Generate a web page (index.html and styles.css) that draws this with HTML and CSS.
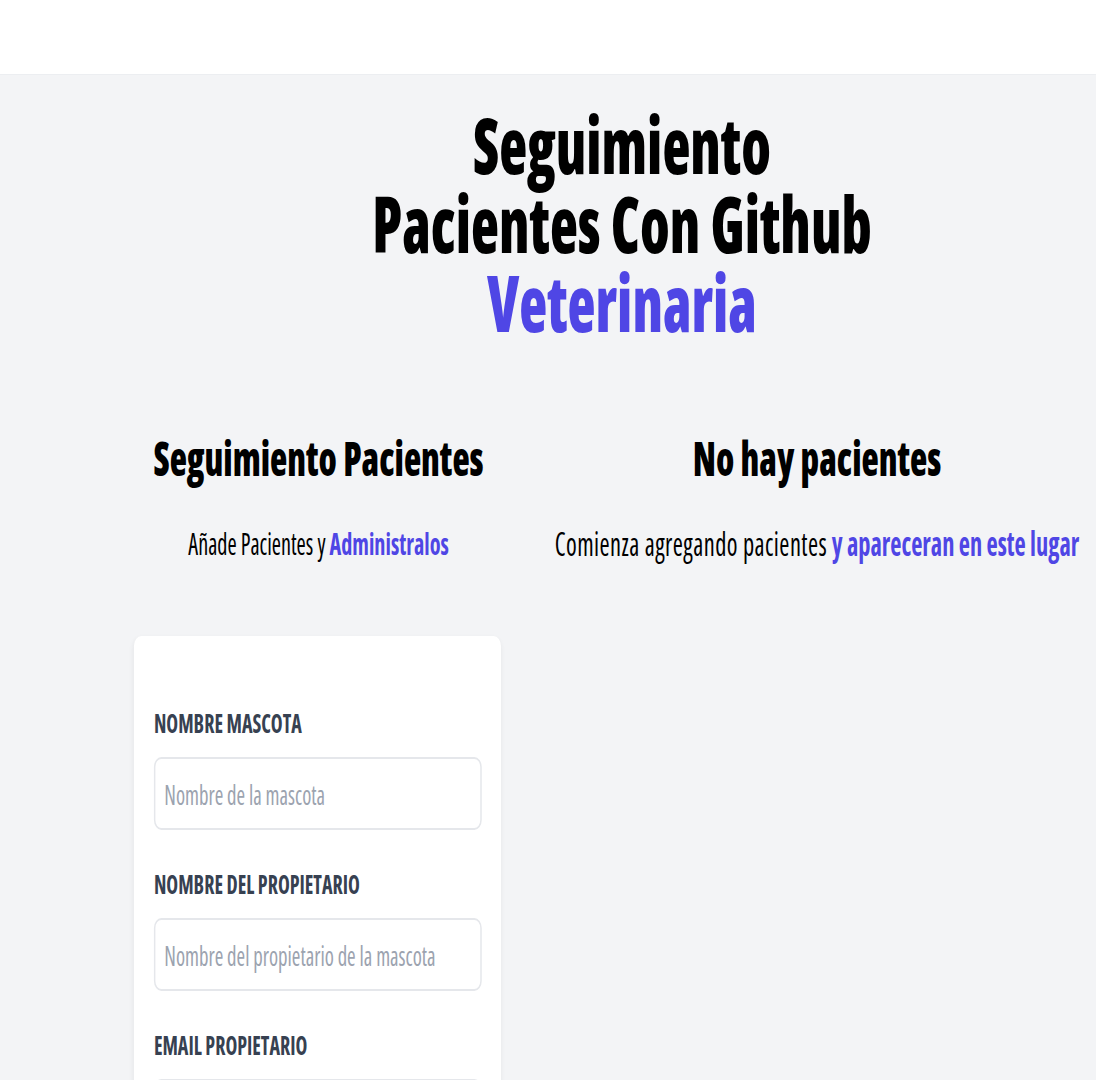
FILE: index.html
```html
<!DOCTYPE html>
<html lang="es">
<head>
<meta charset="utf-8">
<title>Seguimiento Pacientes Veterinaria</title>
<link rel="stylesheet" href="styles.css">
</head>
<body>
<div class="page">
  <header class="topbar"></header>
  <main class="main">
    <h1 class="title">Seguimiento<br>Pacientes Con Github <span class="title-accent">Veterinaria</span></h1>
    <div class="columns">
      <section class="form-col">
        <h2 class="col-title">Seguimiento Pacientes</h2>
        <p class="col-sub">Añade Pacientes y <span class="accent">Administralos</span></p>
        <form class="card">
          <div class="field">
            <label class="label" for="mascota">Nombre Mascota</label>
            <input class="input" id="mascota" type="text" placeholder="Nombre de la mascota">
          </div>
          <div class="field">
            <label class="label" for="propietario">Nombre del Propietario</label>
            <input class="input" id="propietario" type="text" placeholder="Nombre del propietario de la mascota">
          </div>
          <div class="field">
            <label class="label" for="email">Email Propietario</label>
            <input class="input" id="email" type="email" placeholder="Email del propietario">
          </div>
          <div class="field">
            <label class="label" for="alta">Alta</label>
            <input class="input" id="alta" type="text" placeholder="Fecha de alta">
          </div>
        </form>
      </section>
      <section class="list-col">
        <h2 class="col-title">No hay pacientes</h2>
        <p class="col-sub col-sub-wide"><span class="plain">Comienza agregando pacientes</span> <span class="accent">y apareceran en este lugar</span></p>
      </section>
    </div>
  </main>
</div>
</body>
</html>
```
FILE: styles.css
```css
html, body {
  margin: 0;
  padding: 0;
  overflow-x: hidden;
  background: #f3f4f6;
}

.page {
  width: 1481px;
  transform: scaleX(0.74);
  transform-origin: 0 0;
  font-family: "Open Sans", "Liberation Sans", sans-serif;
  font-stretch: 75%;
  color: #000;
}

.topbar {
  height: 74px;
  background: #ffffff;
  border-bottom: 1px solid #eceef1;
}

.main {
  background: #f3f4f6;
  min-height: 1005px;
  padding-top: 30px;
}

.title {
  margin: 0;
  padding-left: 200px;
  text-align: center;
  font-size: 78px;
  line-height: 79px;
  font-weight: 800;
  color: #000;
}

.title-accent {
  display: block;
  color: #4f46e5;
}

.columns {
  display: flex;
  margin-top: 88px;
  padding-left: 134px;
}

.form-col {
  width: 593px;
  flex: none;
}

.list-col {
  flex: 1;
}

.col-title {
  margin: 0;
  text-align: center;
  font-size: 48px;
  line-height: 56px;
  font-weight: 800;
  color: #000;
}

.col-sub {
  margin: 40px 0 0;
  text-align: center;
  font-size: 30px;
  line-height: 36px;
  font-weight: 400;
  color: #000;
  white-space: nowrap;
}

.col-sub-wide {
  font-size: 33px;
}

.plain {
  letter-spacing: 0.6px;
}

.accent {
  color: #4f46e5;
  font-weight: 700;
}

.card {
  margin: 74px 50px 0 47px;
  padding: 71px 26px 60px 27px;
  background: #ffffff;
  border-radius: 10px;
  box-shadow: 0 2px 6px rgba(0, 0, 0, 0.06);
  display: flex;
  flex-direction: column;
  gap: 38px;
}

.field {
  display: flex;
  flex-direction: column;
  gap: 18px;
}

.label {
  display: block;
  font-size: 27px;
  line-height: 32px;
  font-weight: 700;
  text-transform: uppercase;
  color: #374151;
}

.input {
  box-sizing: border-box;
  width: 100%;
  height: 73px;
  padding: 0 12px;
  border: 2px solid #e5e7eb;
  border-radius: 10px;
  background: #fff;
  font-family: inherit;
  font-stretch: 75%;
  font-size: 28px;
  color: #111827;
  outline: none;
}

.input::placeholder {
  color: #9ca3af;
}
```
